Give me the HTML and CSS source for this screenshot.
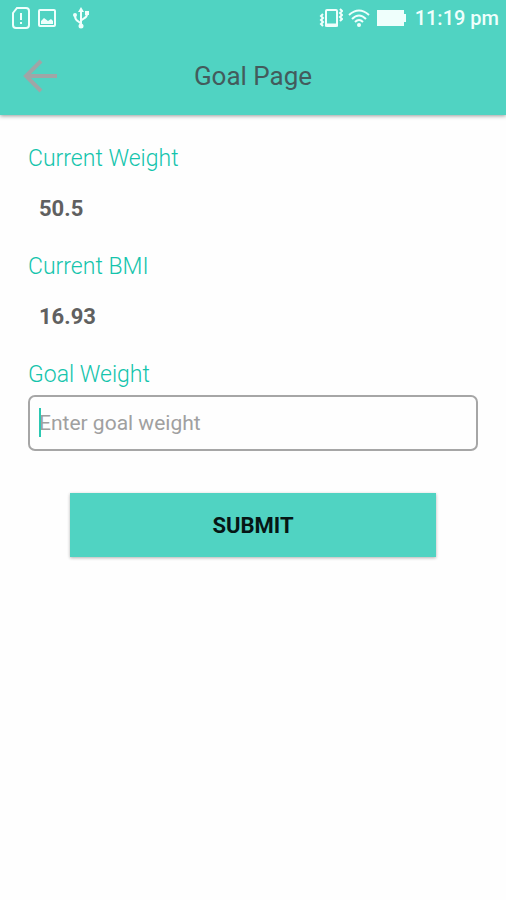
FILE: index.html
```html
<!DOCTYPE html>
<html lang="en">
<head>
<meta charset="utf-8">
<meta name="viewport" content="width=device-width, initial-scale=1">
<title>Goal Page</title>
<link rel="stylesheet" href="styles.css">
</head>
<body>
<header class="top">
  <div class="status">
    <div class="status-group notices">
      <svg width="20" height="24" viewBox="0 0 20 24" fill="none" stroke="currentColor" stroke-width="2">
        <path d="M6 2h9a3 3 0 0 1 3 3v14a3 3 0 0 1-3 3H5a3 3 0 0 1-3-3V7z"/>
        <path d="M10 7v7M10 16v2"/>
      </svg>
      <svg width="20" height="20" viewBox="0 0 20 20" fill="none" stroke="currentColor" stroke-width="2">
        <rect x="2" y="2" width="16" height="16" rx="1"/>
        <path d="M4 16v-3l3-3 4 3 3-2 2 2v3z" fill="currentColor" stroke="none"/>
      </svg>
      <svg class="usb" width="20" height="24" viewBox="0 0 20 24" fill="none" stroke="currentColor" stroke-width="2">
        <path d="M10 4v16M10 18c-1-3-6-2-6-8M10 15c1-3 6-2 6-7"/>
        <path d="M10 1l3 5H7zM14 5h4v4h-4z" fill="currentColor" stroke="none"/>
        <circle cx="4" cy="9" r="2" fill="currentColor" stroke="none"/>
        <circle cx="10" cy="20" r="2.5" fill="currentColor" stroke="none"/>
      </svg>
    </div>
    <div class="status-group">
      <svg width="24" height="20" viewBox="0 0 24 20" fill="none" stroke="currentColor" stroke-width="2">
        <rect x="7" y="2" width="11" height="16" rx="1"/>
        <path d="M6 17h13" stroke-width="3"/>
        <path d="M4 6l-2 2 2 2-2 2 2 2-2 2 2 2M21 1l2 2-2 2 2 2-2 2 2 2-2 2" stroke-width="2"/>
      </svg>
      <svg width="24" height="20" viewBox="0 0 24 20" fill="none" stroke="currentColor" stroke-width="2">
        <path d="M2 7q10-9 20 0M5 11q7-7 14 0M8 14q4-4 8 0"/>
        <circle cx="12" cy="17" r="2" fill="currentColor" stroke="none"/>
      </svg>
      <svg class="battery" width="30" height="18" viewBox="0 0 30 18" fill="currentColor">
        <path d="M1 1h27v4h2v8h-2v4H1z"/>
      </svg>
      <time class="clock">11:19 pm</time>
    </div>
  </div>
  <div class="bar">
    <button class="back" type="button" aria-label="Back">
      <svg width="34" height="34" viewBox="0 0 34 34" fill="none" stroke="currentColor" stroke-width="4">
        <path d="M18 2L3 17l15 15M3 17h31"/>
      </svg>
    </button>
    <h1 class="title">Goal Page</h1>
  </div>
</header>
<main>
  <form class="form">
    <label class="label" for="weight">Current Weight</label>
    <output class="value" id="weight">50.5</output>
    <label class="label" for="bmi">Current BMI</label>
    <output class="value" id="bmi">16.93</output>
    <label class="label" for="goal">Goal Weight</label>
    <div class="field">
      <input class="input" id="goal" type="text" inputmode="decimal" placeholder="Enter goal weight">
      <span class="caret"></span>
    </div>
    <button class="submit" type="submit">SUBMIT</button>
  </form>
</main>
</body>
</html>
```
FILE: styles.css
```css
* {
  box-sizing: border-box;
}

body {
  margin: 0;
  min-height: 100vh;
  background: #fefefe;
  font-family: Roboto, "Liberation Sans", sans-serif;
}

.top {
  background: #50d3c2;
  box-shadow: 0 1px 4px rgba(0, 0, 0, 0.4);
}

.status {
  display: flex;
  justify-content: space-between;
  height: 36px;
  padding: 0 7px 0 11px;
  color: #effffc;
}

.status-group {
  display: flex;
  align-items: center;
  gap: 4px;
}

.notices {
  gap: 6px;
}

.usb {
  margin-left: 8px;
}

.battery {
  margin-left: 1px;
}

.clock {
  margin-left: 5px;
  font-size: 20px;
  font-weight: 500;
  line-height: 38px;
}

.bar {
  display: grid;
  grid-template-columns: 57px 1fr 57px;
  align-items: center;
  height: 79px;
}

.back {
  display: flex;
  justify-content: flex-end;
  padding: 0;
  border: 0;
  background: none;
  color: #a0a5a6;
}

.title {
  margin: 0;
  color: #435b5c;
  font-size: 26px;
  font-weight: 400;
  line-height: 32px;
  text-align: center;
}

.form {
  display: flex;
  flex-direction: column;
  padding: 28px 28px 0;
}

.label {
  color: #14c4ac;
  font-size: 23px;
  font-weight: 300;
  line-height: 32px;
}

.value {
  padding: 18px 11px 26px;
  color: #606060;
  font-size: 22px;
  font-weight: 700;
  line-height: 32px;
}

.field {
  position: relative;
  margin-top: 4px;
}

.input {
  display: block;
  width: 100%;
  height: 56px;
  padding: 0 9px;
  border: 2px solid #a6a6a6;
  border-radius: 7px;
  background: #fefefe;
  color: #606060;
  font-family: inherit;
  font-size: 21px;
}

.input::placeholder {
  color: #a0a0a0;
  opacity: 1;
}

.caret {
  position: absolute;
  top: 13px;
  left: 11px;
  width: 2px;
  height: 29px;
  background: #2bc8b2;
}

.submit {
  height: 64px;
  margin: 42px 42px 0;
  border: 0;
  background: #50d3c2;
  box-shadow: 0 1px 3px rgba(0, 0, 0, 0.3);
  color: #061615;
  font-family: inherit;
  font-size: 22px;
  font-weight: 700;
}
```
